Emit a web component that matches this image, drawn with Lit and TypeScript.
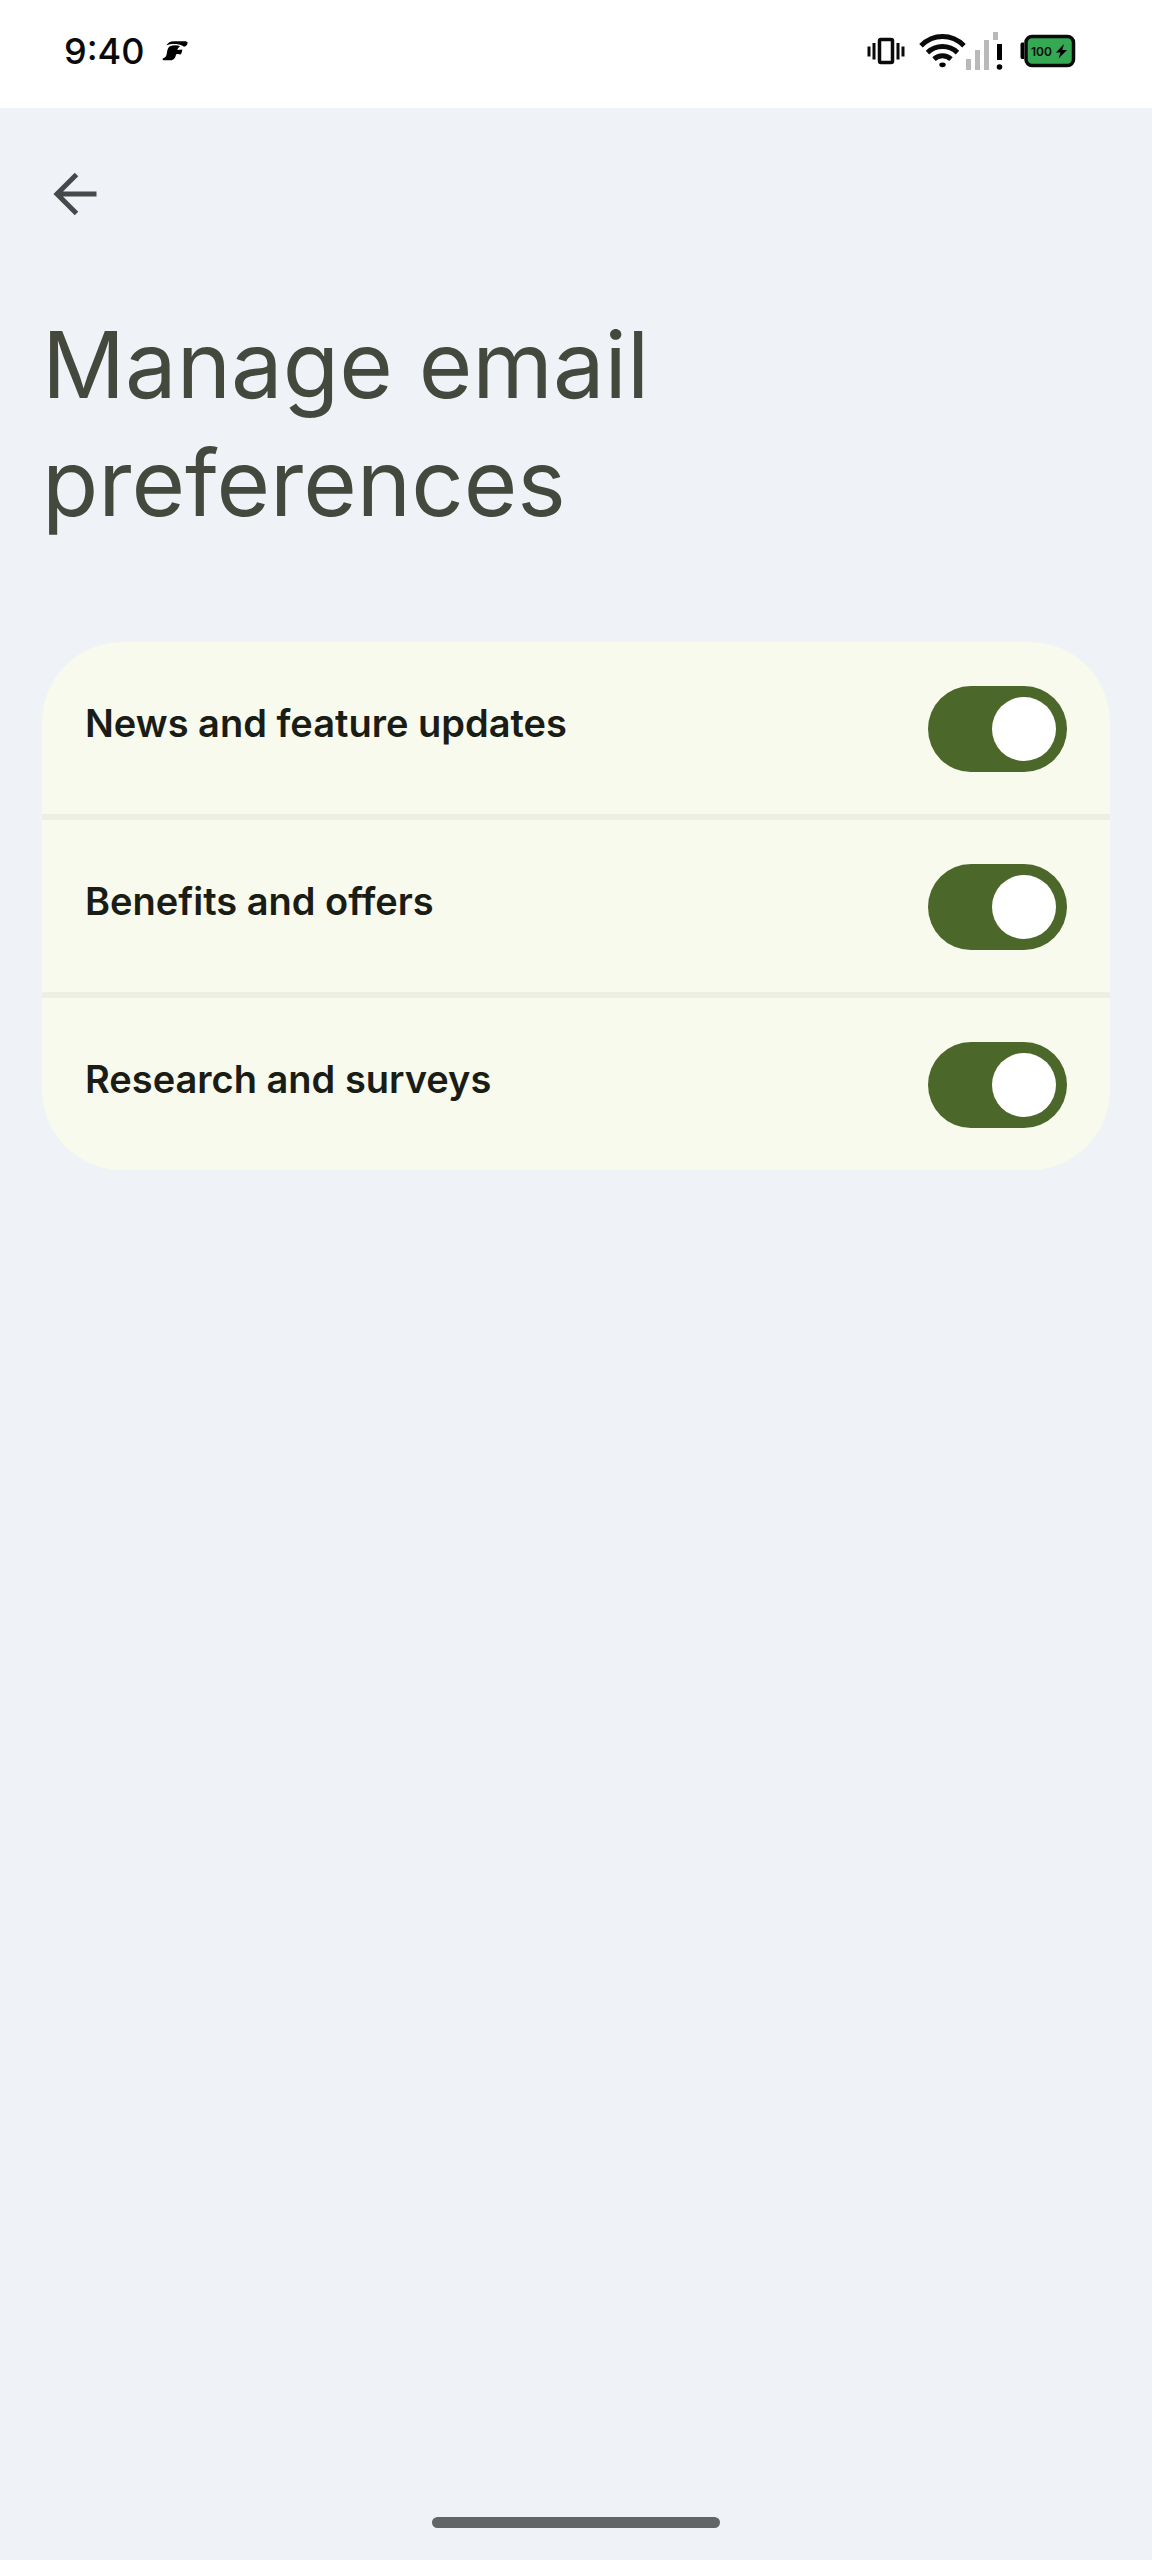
import { LitElement, html, css } from "lit";
import { customElement, property, state } from "lit/decorators.js";

@customElement("status-bar")
class StatusBar extends LitElement {
  static styles = css`
    :host {
      display: flex;
      align-items: center;
      justify-content: space-between;
      box-sizing: border-box;
      height: 108px;
      padding: 0 76px 6px 64px;
      background: #fff;
      color: #0a0a0a;
    }
    .side {
      display: flex;
      align-items: center;
    }
    .left {
      gap: 18px;
    }
    .time {
      font-size: 36px;
      line-height: 44px;
      font-weight: 500;
    }
    svg {
      display: block;
      flex: none;
    }
    .wifi {
      margin-left: 14px;
    }
    .battery {
      margin-left: 16px;
    }
    .level {
      font-size: 12px;
      font-weight: 600;
    }
  `;

  render() {
    return html`
      <div class="side left">
        <span class="time">9:40</span>
        <svg width="26" height="22" viewBox="0 0 26 22" aria-hidden="true">
          <path
            d="M4.500 5.500C5.500 2.500 8.500 1.300 12 1.200L22.500 1.200C24.500 1.200 25.800 1.800 25.600 3C25.200 5 24 6.400 22 6.800C20.500 5.600 19.500 5 17 4.500C12.500 3.800 8 4 4.500 5.500Z"
          />
          <path
            d="M7.500 6.500C11 5 15.500 5 18 6.200C17 7 15.800 8 15.300 10L20.200 9.500C20.300 11.500 19.600 13.400 18.600 14.600C17 13.800 15.500 13.800 14 14.400C13.500 17.500 12 20 8.500 20.300L2 20.300C0.800 20.300 0.300 19.400 0.900 18.200C4 17.800 4.500 15.500 5 12.500C5.300 10 5.800 8 7.500 6.500Z"
          />
        </svg>
      </div>
      <div class="side">
        <svg width="38" height="30" viewBox="0 0 38 30" aria-label="Vibrate">
          <rect x="12.500" y="3.500" width="13" height="23" rx="1.500" fill="none" stroke="currentColor" stroke-width="3.500" />
          <path
            d="M2 10.500V20.500M7 7V23.500M31 7V23.500M36 10.500V20.500"
            stroke="currentColor"
            stroke-width="3"
          />
        </svg>
        <svg class="wifi" width="47" height="34" viewBox="0 0 47 34" aria-label="Wi-Fi">
          <g fill="none" stroke="currentColor" stroke-width="5">
            <path d="M2 11.700C14.500 -0.500 32.500 -0.500 45 11.700" />
            <path d="M8.500 18.600C17 10.600 30 10.600 38.500 18.600" />
            <path d="M15 25.200C20 20.600 27 20.600 32 25.200" />
          </g>
          <ellipse cx="23.500" cy="30.800" rx="3.200" ry="2.400" />
        </svg>
        <svg width="38" height="40" viewBox="0 0 38 40" aria-label="Signal">
          <path
            d="M0 28h5v11h-5zM9 19h5v20h-5zM18 9h5v30h-5zM27 1h5v8h-5z"
            fill="#b9b9b9"
          />
          <rect x="31" y="13" width="5" height="16" />
          <circle cx="33.500" cy="36" r="2.800" />
        </svg>
        <svg class="battery" width="56" height="34" viewBox="0 0 56 34" aria-label="Battery">
          <path d="M4 8.500H2Q0.500 8.500 0.500 10.500V23Q0.500 25 2 25H4Z" />
          <rect x="6" y="2.500" width="47.500" height="29" rx="6" fill="#34a853" stroke="currentColor" stroke-width="3.500" />
          <text class="level" x="11" y="21.500" fill="currentColor">100</text>
          <path d="M44 10L36 18.500H40.500L38.500 24.500L47 16H42.300Z" />
        </svg>
      </div>
    `;
  }
}

@customElement("preference-row")
class PreferenceRow extends LitElement {
  @property() label = "";
  @property({ type: Boolean }) on = false;

  static styles = css`
    :host {
      display: block;
    }
    .row {
      display: flex;
      align-items: flex-start;
      justify-content: space-between;
      gap: 24px;
      padding: 44px 43px 42px;
      background: #f8faee;
    }
    .label {
      flex: 1;
      font-size: 38px;
      line-height: 74px;
      font-weight: 600;
      color: #1a1d15;
    }
    .switch {
      appearance: none;
      display: flex;
      flex: none;
      align-items: center;
      box-sizing: border-box;
      width: 139px;
      height: 86px;
      margin: 0;
      padding: 0 11px;
      border-radius: 43px;
      background: #a9ad9f;
      cursor: pointer;
    }
    .switch::before {
      content: "";
      width: 64px;
      height: 64px;
      border-radius: 50%;
      background: #fff;
    }
    .switch:checked {
      justify-content: flex-end;
      background: #4c672a;
    }
  `;

  private toggle(e: Event) {
    this.on = (e.target as HTMLInputElement).checked;
  }

  render() {
    return html`
      <div class="row">
        <label class="label" for="switch">${this.label}</label>
        <input id="switch" class="switch" type="checkbox" role="switch" .checked=${this.on} @change=${this.toggle} />
      </div>
    `;
  }
}

@customElement("app-root")
class AppRoot extends LitElement {
  @state() private preferences = [
    "News and feature updates",
    "Benefits and offers",
    "Research and surveys",
  ];

  static styles = css`
    :host {
      display: flex;
      flex-direction: column;
      min-height: 100vh;
      background: #eff3f8;
      font-family: Inter, Roboto, sans-serif;
    }
    .content {
      flex: 1;
      padding: 54px 42px 0;
    }
    .back {
      display: flex;
      align-items: center;
      justify-content: center;
      width: 66px;
      height: 64px;
      margin: 0;
      padding: 0;
      border: 0;
      background: none;
      color: #46484a;
      cursor: pointer;
    }
    .title {
      margin: 80px 0 100px;
      max-width: 700px;
      font-size: 92px;
      line-height: 118px;
      font-weight: 400;
      color: #45493d;
    }
    .card {
      display: flex;
      flex-direction: column;
      gap: 6px;
      overflow: hidden;
      border-radius: 80px;
      background: #ecefe2;
    }
    .nav {
      display: flex;
      justify-content: center;
      padding: 32px 0;
    }
    .pill {
      width: 25%;
      height: 11px;
      border-radius: 6px;
      background: #636466;
    }
  `;

  render() {
    return html`
      <status-bar></status-bar>
      <main class="content">
        <button class="back" aria-label="Back">
          <svg width="44" height="44" viewBox="0 0 44 44" fill="none" stroke="currentColor" stroke-width="5" aria-hidden="true">
            <path d="M43.500 22H4M23.500 2.500L4 22L23.500 41.500" />
          </svg>
        </button>
        <h1 class="title">Manage email preferences</h1>
        <section class="card">
          ${this.preferences.map((name) => html`<preference-row label=${name} on></preference-row>`)}
        </section>
      </main>
      <footer class="nav"><div class="pill"></div></footer>
    `;
  }
}
